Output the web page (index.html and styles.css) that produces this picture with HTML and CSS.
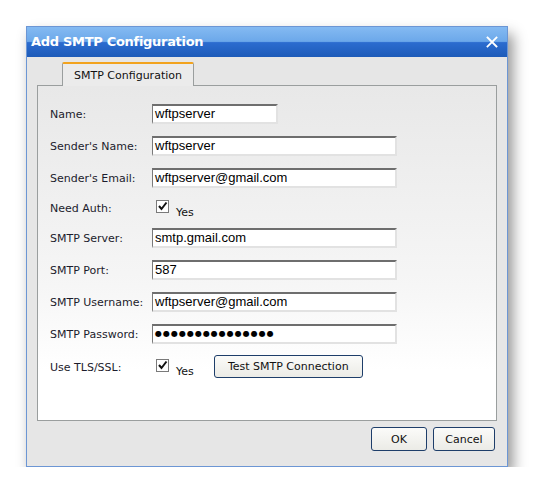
FILE: index.html
```html
<!DOCTYPE html>
<html>
<head>
<meta charset="utf-8">
<link rel="stylesheet" href="styles.css">
</head>
<body>
<div class="dialog">
  <div class="titlebar">
    <span class="title">Add SMTP Configuration</span>
    <svg class="close" width="12" height="12" viewBox="0 0 12 12"><path d="M1.5 1.5 L10.5 10.5 M10.5 1.5 L1.5 10.5" stroke="#fff" stroke-width="1.8" stroke-linecap="square"/></svg>
  </div>
  <div class="content">
    <div class="tabs"><div class="tab">SMTP Configuration</div></div>
    <div class="panel">
      <div class="row"><div class="label">Name:</div><div class="field short">wftpserver</div></div>
      <div class="row"><div class="label">Sender's Name:</div><div class="field">wftpserver</div></div>
      <div class="row"><div class="label">Sender's Email:</div><div class="field">wftpserver@gmail.com</div></div>
      <div class="row check-row"><div class="label">Need Auth:</div><span class="checkbox"><svg width="11" height="11" viewBox="0 0 11 11"><path d="M2 5 L4.5 8 L9.5 1.5" fill="none" stroke="#111" stroke-width="2"/></svg></span><span class="yes">Yes</span></div>
      <div class="row"><div class="label">SMTP Server:</div><div class="field">smtp.gmail.com</div></div>
      <div class="row"><div class="label">SMTP Port:</div><div class="field">587</div></div>
      <div class="row"><div class="label">SMTP Username:</div><div class="field">wftpserver@gmail.com</div></div>
      <div class="row"><div class="label">SMTP Password:</div><div class="field dots">●●●●●●●●●●●●●●●</div></div>
      <div class="row check-row last"><div class="label">Use TLS/SSL:</div><span class="checkbox"><svg width="11" height="11" viewBox="0 0 11 11"><path d="M2 5 L4.5 8 L9.5 1.5" fill="none" stroke="#111" stroke-width="2"/></svg></span><span class="yes">Yes</span><button class="btn test">Test SMTP Connection</button></div>
    </div>
    <div class="footer">
      <button class="btn ok">OK</button>
      <button class="btn cancel">Cancel</button>
    </div>
  </div>
</div>
</body>
</html>
```
FILE: styles.css
```css
html, body { margin: 0; padding: 0; background: #fff; }
body { padding: 26px 0 0 26px; font-family: "DejaVu Sans", Verdana, sans-serif; }
.dialog {
  width: 480px;
  height: 439px;
  border: 1px solid #6c96d4;
  background: #e6e6e6;
  box-shadow: 5px 8px 13px rgba(0,0,0,0.42);
  display: flex;
  flex-direction: column;
}
.titlebar {
  height: 30px;
  flex: none;
  background: linear-gradient(#84baf2 0%, #6ca8ea 48%, #2c6ccf 52%, #1d5bb9 100%);
  display: flex;
  align-items: center;
  justify-content: space-between;
  padding: 0 9px 0 4px;
}
.title { color: #fff; font-weight: bold; font-size: 13px; letter-spacing: -0.3px; margin-top: -2px; }
.close { margin-top: -1px; }
.content { flex: 1; display: flex; flex-direction: column; padding: 5px 10px 0 10px; }
.tabs { display: flex; padding-left: 25px; }
.tab {
  width: 132px;
  border: 1px solid #9a9e9e;
  border-top: 2px solid #f2a31e;
  border-bottom: none;
  border-radius: 2px 2px 0 0;
  background: #ebebeb;
  font-size: 11px;
  color: #111;
  display: flex;
  align-items: center;
  justify-content: center;
  padding-top: 1px;
  margin-bottom: -1px;
  position: relative;
  z-index: 1;
  box-sizing: border-box;
  height: 24px;
}
.panel {
  height: 336px;
  box-sizing: border-box;
  border: 1px solid #9a9e9e;
  background: linear-gradient(#e8e8e8 0%, #f6f6f6 60%, #fff 85%);
  padding: 17px 0 0 12px;
}
.row { display: flex; align-items: center; height: 21px; margin-bottom: 11px; }
.row.check-row { height: 17px; }
.label { width: 102px; flex: none; font-size: 11px; color: #1c1c2c; padding-top: 2px; }
.field {
  width: 240px;
  height: 16px;
  background: #fff;
  border-top: 2px solid #6e6e6e;
  border-left: 1px solid #7a7a7a;
  border-right: 2px solid #e2e2e2;
  border-bottom: 2px solid #e2e2e2;
  font-family: "Liberation Sans", Arial, sans-serif;
  font-size: 13px;
  color: #000;
  padding-left: 2px;
  line-height: 16px;
  box-sizing: content-box;
}
.field.short { width: 121px; }
.field.dots { font-size: 8px; letter-spacing: 1px; font-family: "DejaVu Sans", sans-serif; }
.checkbox {
  width: 11px; height: 11px;
  border: 1px solid #7a7a7a;
  background: #fff;
  margin-left: 4px;
  display: flex; align-items: center; justify-content: center;
  margin-top: -3px;
}
.yes { font-size: 11px; color: #111; margin-left: 7px; margin-top: 9px; }
.check-row.last { height: 23px; margin-bottom: 0; }
.btn {
  font-family: "DejaVu Sans", Verdana, sans-serif;
  font-size: 11px;
  color: #111;
  border: 1px solid #1e3e6a;
  border-radius: 3px;
  background: linear-gradient(#fbfbf9, #ebebe6);
  height: 24px;
  padding: 0;
}
.btn.test { width: 149px; height: 23px; margin-left: 20px; }
.footer { display: flex; justify-content: flex-end; gap: 6px; padding: 6px 2px 0 0; }
.btn.ok { width: 56px; }
.btn.cancel { width: 62px; }
```
